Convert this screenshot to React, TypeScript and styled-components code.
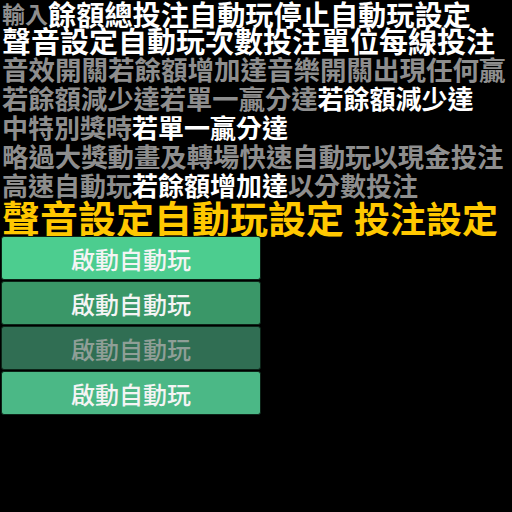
import React from "react";
import styled, { createGlobalStyle } from "styled-components";

const Global = createGlobalStyle`
  html, body { margin: 0; padding: 0; background: #000; }
  body { font-family: "Noto Sans CJK TC", "Noto Sans", sans-serif; }
`;

const Page = styled.div`
  width: 512px;
  height: 512px;
  background: #000;
  display: flex;
  flex-direction: column;
  overflow: hidden;
`;

const Lines = styled.div`
  display: flex;
  flex-direction: column;
  padding-left: 2px;
`;

const Line = styled.div<{ $h: number }>`
  height: ${(p) => p.$h}px;
  line-height: ${(p) => p.$h}px;
  white-space: nowrap;
  display: flex;
  align-items: center;
`;

const Seg = styled.span<{ $tone: "grey" | "white"; $size: number }>`
  font-size: ${(p) => p.$size}px;
  font-weight: 700;
  color: ${(p) => (p.$tone === "grey" ? "#8e8e8e" : "#ffffff")};
`;

const Title = styled.div`
  height: 36px;
  line-height: 36px;
  padding-left: 2px;
  font-weight: 700;
  color: #ffc800;
  white-space: nowrap;
  display: flex;
  align-items: center;
  gap: 10px;
`;

const TitlePart = styled.span<{ $size: number }>`
  font-size: ${(p) => p.$size}px;
`;

const Buttons = styled.div`
  display: flex;
  flex-direction: column;
  padding-left: 1px;
  margin-top: 1px;
`;

const Btn = styled.div<{ $bg: string; $fg: string }>`
  width: 260px;
  height: 44px;
  box-sizing: border-box;
  border: 1px solid #0c2418;
  border-radius: 3px;
  background: ${(p) => p.$bg};
  color: ${(p) => p.$fg};
  font-size: 24px;
  font-weight: 500;
  display: flex;
  align-items: center;
  justify-content: center;
  margin-bottom: 1px;
`;

type S = [string, "grey" | "white", number];

const lines: { h: number; segs: S[] }[] = [
  { h: 27, segs: [["輸入", "grey", 23], ["餘額總投注自動玩停止自動玩設定", "white", 28.2]] },
  { h: 27, segs: [["聲音設定自動玩次數投注單位每線投注", "white", 29]] },
  { h: 29, segs: [["音效開關若餘額增加達音樂開關出現任何贏", "grey", 26.5]] },
  { h: 29, segs: [["若餘額減少達若單一贏分達", "grey", 26.3], ["若餘額減少達", "white", 26]] },
  { h: 29, segs: [["中特別獎時", "grey", 26], ["若單一贏分達", "white", 26]] },
  { h: 29, segs: [["略過大獎動畫及轉場快速自動玩以現金投注", "grey", 26.4]] },
  { h: 29, segs: [["高速自動玩", "grey", 26], ["若餘額增加達", "white", 26], ["以分數投注", "grey", 26]] },
];

const buttons = [
  { bg: "#4ccd8f", fg: "#f4f4f4" },
  { bg: "#3a9768", fg: "#f4f4f4" },
  { bg: "#306e53", fg: "#8f9f97" },
  { bg: "#4bb886", fg: "#f4f4f4" },
];

export default function App() {
  return (
    <Page>
      <Global />
      <Lines>
        {lines.map((l, i) => (
          <Line key={i} $h={l.h}>
            {l.segs.map(([t, tone, size], j) => (
              <Seg key={j} $tone={tone} $size={size}>
                {t}
              </Seg>
            ))}
          </Line>
        ))}
      </Lines>
      <Title>
        <TitlePart $size={38}>聲音設定自動玩設定</TitlePart>
        <TitlePart $size={36}>投注設定</TitlePart>
      </Title>
      <Buttons>
        {buttons.map((b, i) => (
          <Btn key={i} $bg={b.bg} $fg={b.fg}>
            啟動自動玩
          </Btn>
        ))}
      </Buttons>
    </Page>
  );
}
